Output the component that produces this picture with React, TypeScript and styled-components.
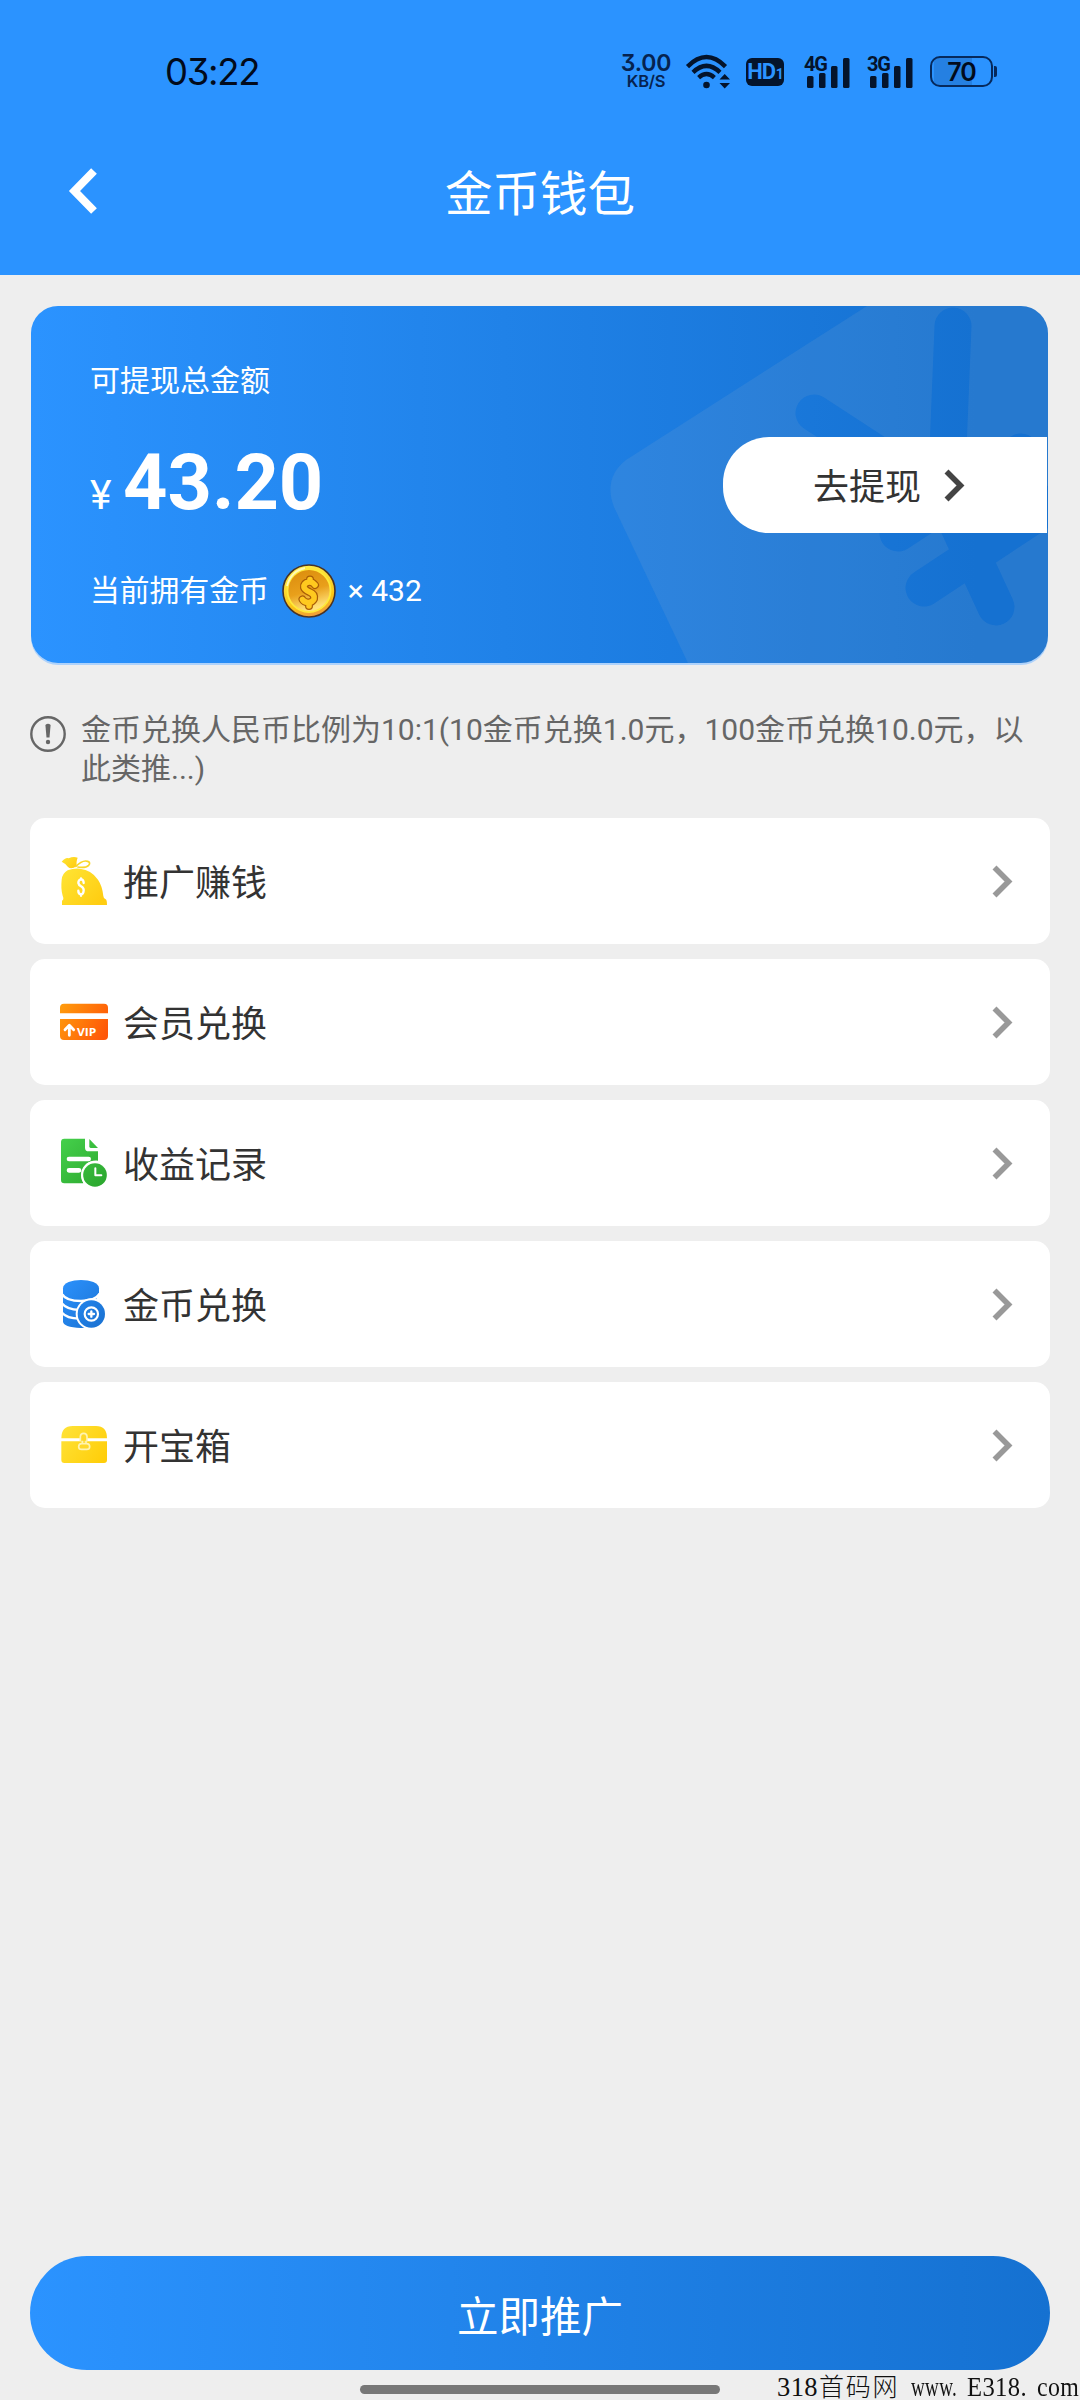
import React from 'react';
import styled, { createGlobalStyle } from 'styled-components';

const GlobalStyle = createGlobalStyle`
  * { box-sizing: border-box; }
  body {
    margin: 0;
    background: #eeeeee;
    font-family: Roboto, "Noto Sans CJK SC", sans-serif;
  }
  svg { display: block; flex: none; overflow: visible; }
`;

const Screen = styled.div`
  width: 1080px;
  height: 2400px;
  display: flex;
  flex-direction: column;
  background: #eeeeee;
  position: relative;
  overflow: hidden;
`;

const Header = styled.header`
  height: 275px;
  background: #2b93ff;
`;

const StatusBar = styled.div`
  height: 107px;
  padding: 36px 83px 0 165px;
  display: flex;
  justify-content: space-between;
  align-items: center;
  color: #04142c;
  font-family: Inter, Roboto, sans-serif;
  font-feature-settings: "cv09";
`;

const Clock = styled.div`
  font-size: 36.5px;
  letter-spacing: -1.3px;
  line-height: 40px;
  color: #020b1c;
`;

const StatusIcons = styled.div`
  display: flex;
  align-items: center;
`;

const NetSpeed = styled.div`
  display: flex;
  flex-direction: column;
  align-items: center;
  width: 54px;
  margin-right: 13px;
  font-weight: 600;
  color: #062350;
`;

const SpeedValue = styled.span`
  font-size: 23px;
  line-height: 20px;
  letter-spacing: -0.2px;
`;

const SpeedUnit = styled.span`
  font-size: 16.5px;
  line-height: 17px;
  letter-spacing: -0.3px;
`;

const HdBadge = styled.div`
  width: 38px;
  height: 28px;
  margin: 0 20px 0 14px;
  border-radius: 6px;
  background: #04142c;
  color: #2b93ff;
  display: flex;
  align-items: baseline;
  justify-content: center;
  font-family: Roboto, sans-serif;
  font-weight: 700;
  font-size: 22px;
  line-height: 28px;
  letter-spacing: -1.2px;
`;

const HdIndex = styled.span`
  font-size: 14px;
  margin-left: 1px;
`;

const Signal = styled.div`
  width: 46px;
  height: 34px;
  margin-right: 17px;
  position: relative;
`;

const SignalLabel = styled.span`
  position: absolute;
  left: 0;
  top: 0;
  font-family: Roboto, sans-serif;
  font-weight: 700;
  font-size: 20px;
  line-height: 18px;
  letter-spacing: -1.2px;
`;

const Battery = styled.div`
  width: 63px;
  height: 31px;
  border: 2.5px solid #06295c;
  border-radius: 10px;
  background: linear-gradient(90deg, #2b93ff 2px, #2580e2 2px, #2580e2 40px, #2b93ff 40px);
  display: flex;
  align-items: center;
  justify-content: center;
  font-weight: 600;
  font-size: 25px;
  letter-spacing: -1px;
  color: #020b1c;
`;

const BatteryTip = styled.div`
  width: 3px;
  height: 11px;
  margin-left: 1px;
  border-radius: 0 2px 2px 0;
  background: #06295c;
`;

const NavBar = styled.div`
  height: 167px;
  padding: 0 69px;
  display: grid;
  grid-template-columns: 100px 1fr 100px;
  align-items: center;
`;

const Title = styled.h1`
  margin: 8px 0 0;
  text-align: center;
  font-size: 47.5px;
  line-height: 60px;
  font-weight: 400;
  color: #ffffff;
`;

const Main = styled.main`
  flex: 1;
  padding: 31px 30px 0;
  display: flex;
  flex-direction: column;
`;

const Card = styled.section`
  margin: 0 2px 0 1px;
  height: 357px;
  flex: none;
  border-radius: 27px;
  background: linear-gradient(90deg, #2b93ff, #1571d1 93%);
  box-shadow: 0 2px 0 #aed2fb;
  color: #ffffff;
  display: grid;
  grid-template-columns: 1fr 325px;
  position: relative;
  overflow: hidden;
`;

const CardArt = styled.svg`
  position: absolute;
  inset: 0;
`;

const Balance = styled.div`
  padding: 55px 0 0 59px;
  position: relative;
`;

const Caption = styled.div`
  font-size: 30px;
  line-height: 40px;
`;

const Amount = styled.div`
  margin-top: 36px;
  height: 92px;
  display: flex;
  align-items: baseline;
  line-height: 92px;
`;

const Currency = styled.span`
  width: 33px;
  font-size: 41px;
`;

const Figure = styled.span`
  font-size: 77.5px;
  font-weight: 700;
`;

const CoinLine = styled.div`
  margin-top: 35px;
  height: 54px;
  display: flex;
  align-items: center;
  font-size: 29.8px;
  line-height: 40px;
`;

const CoinIcon = styled.svg`
  margin: 0 12px 0 13px;
`;

const CoinCount = styled.span`
  font-size: 30px;
  margin-top: -1px;
`;

const WithdrawButton = styled.button`
  align-self: start;
  margin: 131px 1px 0 0;
  height: 96px;
  padding: 0 0 0 90px;
  border: 0;
  border-radius: 46px 0 0 46px;
  background: #ffffff;
  color: #333333;
  display: flex;
  align-items: center;
  gap: 23px;
  font: inherit;
  font-size: 36px;
  line-height: 50px;
  position: relative;
`;

const ButtonText = styled.span`
  margin-top: 6px;
`;

const Notice = styled.p`
  margin: 48px 0 0;
  height: 107px;
  display: flex;
  gap: 15px;
  color: #666666;
  font-size: 30px;
  line-height: 39px;
`;

const NoticeText = styled.span`
  flex: 1;
  margin-top: -1px;
`;

const NoticeIcon = styled.svg`
  margin-top: 5px;
`;

const Menu = styled.nav`
  display: flex;
  flex-direction: column;
  gap: 15px;
`;

const MenuRow = styled.a`
  height: 126px;
  padding: 0 37px 0 28px;
  border-radius: 15px;
  background: #ffffff;
  display: flex;
  align-items: center;
  color: #333333;
`;

const MenuLabel = styled.span`
  flex: 1;
  margin: 6px 0 0 15px;
  font-size: 36px;
  line-height: 50px;
`;

const PromoteButton = styled.button`
  margin: 0 30px 30px;
  height: 114px;
  flex: none;
  border: 0;
  border-radius: 57px;
  background: linear-gradient(90deg, #2b93ff, #1571d1);
  color: #ffffff;
  font: inherit;
  font-size: 41.5px;
  line-height: 60px;
  padding: 9px 0 0;
`;

const HomeIndicator = styled.div`
  position: absolute;
  left: 360px;
  bottom: 6px;
  width: 360px;
  height: 9px;
  border-radius: 5px;
  background: #777777;
`;

const Watermark = styled.div`
  position: absolute;
  right: 0;
  bottom: 0;
  width: 303px;
  display: flex;
  align-items: baseline;
  color: #111111;
  font-family: "Liberation Serif", "Noto Sans CJK SC", serif;
  font-size: 26.5px;
  line-height: 24px;
  white-space: pre;
`;

const MarkPart = styled.span<{ $width: number; $squeeze?: number }>`
  width: ${(p) => p.$width}px;
  flex: none;
  letter-spacing: 0.4px;
  transform: scaleX(${(p) => p.$squeeze ?? 1});
  transform-origin: left center;
`;

const MarkHan = styled(MarkPart)`
  font-weight: 300;
  font-size: 25px;
  letter-spacing: 1.8px;
`;

const Chevron = ({ color }: { color: string }) => (
  <svg width="21" height="33" viewBox="0 0 21 33" fill="none" stroke={color} strokeWidth="5.6">
    <path d="M2.5 2.5 16.5 16.5 2.5 30.5" />
  </svg>
);

const Wifi = () => (
  <svg width="46" height="35" viewBox="0 0 46 35" fill="none" stroke="#04142c" strokeWidth="4.4">
    <path d="M1.5 12.6Q20.500 -6.500 39.500 12.600" />
    <path d="M7 18.300Q20.500 5.500 34 18.300" />
    <path d="M12.600 23.600Q20.500 16.500 28.400 23.600" />
    <circle cx="20.500" cy="31" r="3.300" fill="#04142c" stroke="none" />
    <path d="M33.500 25.500 38.700 20 44 25.500ZM33.500 29 38.700 34.500 44 29Z" fill="#04142c" stroke="none" />
  </svg>
);

const SignalIcon = ({ label }: { label: string }) => (
  <Signal>
    <svg width="46" height="34" viewBox="0 0 46 34" fill="#04142c">
      <rect x="3" y="21" width="6.500" height="12" rx="1.500" />
      <rect x="15" y="18" width="6.500" height="15" rx="1.500" />
      <rect x="27" y="11" width="6.500" height="22" rx="1.500" />
      <rect x="39" y="3" width="6.500" height="30" rx="1.500" />
    </svg>
    <SignalLabel>{label}</SignalLabel>
  </Signal>
);

const BagIcon = () => (
  <svg width="50" height="50" viewBox="54 78 150 150">
    <defs>
      <linearGradient id="bag" x1="0" y1="0" x2="1" y2="0.7">
        <stop offset="0" stopColor="#ffe535" />
        <stop offset="1" stopColor="#ffcd12" />
      </linearGradient>
    </defs>
    <path fill="url(#bag)" d="M65 95Q78 80 86 85Q100 78 113 83Q107 99 111 107Q94 120 84 111Q78 101 65 95Z" />
    <path fill="none" stroke="#f9d72a" strokeWidth="5" d="M106 111Q127 89 143 94Q153 97 146 106Q137 115 112 111" />
    <path fill="url(#bag)" d="M83 121Q101 114 120 116Q155 120 174 149Q187 168 190 198Q191 207 197 208Q201 210 201 225H66V212Q73 209 68 197Q62 177 65 149Q67 130 83 121Z" />
    <path fill="none" stroke="#fff" strokeWidth="7" strokeLinecap="round" d="M131 159Q131 148 123 148Q115 149 115 159Q116 165 123 169Q132 174 131 182Q130 193 123 193Q115 192 115 182M123 145V149M123 193V197" />
  </svg>
);

const VipIcon = () => (
  <svg width="50" height="50" viewBox="54 501 150 150">
    <defs>
      <linearGradient id="vip" x1="60" y1="522" x2="205" y2="600" gradientUnits="userSpaceOnUse">
        <stop offset="0" stopColor="#ff9d0c" />
        <stop offset="1" stopColor="#ff5608" />
      </linearGradient>
    </defs>
    <path fill="url(#vip)" d="M60 550V533Q60 521 72 521H192Q204 521 204 533V550ZM60 567H204V618Q204 630 192 630H72Q60 630 60 618Z" />
    <path fill="none" stroke="#fff" strokeWidth="8.500" strokeLinecap="round" strokeLinejoin="round" d="M88 616V588M75 599 88 586 101 599" />
    <text x="111" y="619" fill="#fff" fontFamily="Open Sans, Noto Sans, sans-serif" fontWeight="700" fontSize="34" textLength="58" lengthAdjust="spacingAndGlyphs">VIP</text>
  </svg>
);

const RecordIcon = () => (
  <svg width="50" height="50" viewBox="54 84 150 150">
    <defs>
      <linearGradient id="record" x1="60" y1="90" x2="200" y2="230" gradientUnits="userSpaceOnUse">
        <stop offset="0" stopColor="#45d04b" />
        <stop offset="1" stopColor="#2aa52d" />
      </linearGradient>
    </defs>
    <path fill="url(#record)" d="M73 86H135V113Q135 124 146 124H174V152Q151 150 137 164Q119 184 126 209L130 220H73Q63 220 63 210V96Q63 86 73 86Z" />
    <path fill="url(#record)" d="M148 87 174 114H152Q148 114 148 109Z" />
    <path stroke="#fff" strokeWidth="14" strokeLinecap="round" d="M87 147H146M87 181H117" />
    <circle cx="165" cy="195" r="42" fill="#fff" />
    <circle cx="165" cy="195" r="35.500" fill="url(#record)" />
    <path fill="none" stroke="#fff" strokeWidth="6" strokeLinecap="round" strokeLinejoin="round" d="M166 175V196H184" />
  </svg>
);

const StackIcon = () => (
  <svg width="50" height="50" viewBox="54 507 150 150">
    <defs>
      <linearGradient id="stack" x1="69" y1="520" x2="195" y2="640" gradientUnits="userSpaceOnUse">
        <stop offset="0" stopColor="#2b90fb" />
        <stop offset="1" stopColor="#1a72d2" />
      </linearGradient>
    </defs>
    <path fill="url(#stack)" d="M69 535C69 502 177 502 177 535V640Q160 654 123 654Q69 652 69 634Z" />
    <path fill="none" stroke="#fff" strokeWidth="7" d="M67 553Q78 573 123 573Q165 573 179 551M67 581Q80 598 118 600M67 609Q80 625 118 626" />
    <path fill="#fff" d="M178 545V580L168 570Z" />
    <circle cx="154" cy="612" r="47" fill="#fff" />
    <circle cx="154" cy="612" r="41" fill="url(#stack)" />
    <circle cx="154" cy="612" r="20" fill="none" stroke="#fff" strokeWidth="6.500" />
    <path stroke="#fff" strokeWidth="7" strokeLinecap="round" d="M154 604V620M146 612H162" />
  </svg>
);

const ChestIcon = () => (
  <svg width="50" height="50" viewBox="54 150 150 150">
    <defs>
      <linearGradient id="chest" x1="64" y1="170" x2="201" y2="270" gradientUnits="userSpaceOnUse">
        <stop offset="0" stopColor="#ffe338" />
        <stop offset="1" stopColor="#ffcd08" />
      </linearGradient>
    </defs>
    <path fill="url(#chest)" d="M64 205Q64 168 98 168H168Q201 168 201 205ZM64 214H201V270Q201 279 192 279H73Q64 279 64 270Z" />
    <path fill="#ffd829" stroke="#fff3b0" strokeWidth="5" d="M121 214V199Q122 190 131 190Q140 190 141 199V214M125 221Q116 221 116 230Q116 238 125 238H140Q149 238 149 230Q149 221 140 221Z" />
    <path stroke="#fff3b0" strokeWidth="5" d="M127 221V212M138 221V212" />
  </svg>
);

const Coin = () => (
  <CoinIcon width="54" height="54" viewBox="0 0 54 54">
    <defs>
      <linearGradient id="coinFace" x1="0" y1="0" x2="0.3" y2="1">
        <stop offset="0" stopColor="#d98a0c" />
        <stop offset="0.600" stopColor="#e9a01b" />
        <stop offset="1" stopColor="#ffe27a" />
      </linearGradient>
      <linearGradient id="coinRim" x1="0.300" y1="0" x2="0.600" y2="1">
        <stop offset="0" stopColor="#fff04d" />
        <stop offset="0.700" stopColor="#fbc516" />
        <stop offset="1" stopColor="#f09a3c" />
      </linearGradient>
    </defs>
    <circle cx="27" cy="27" r="26" fill="url(#coinRim)" stroke="#4a3326" strokeWidth="1.600" />
    <circle cx="27" cy="26.500" r="21.500" fill="url(#coinFace)" stroke="#ffe93a" strokeWidth="1.800" />
    <path d="M5 22Q9 7 23 4" fill="none" stroke="#fff9b8" strokeWidth="1.800" />
    <path d="M33 21Q30.500 17.500 27 18Q21.500 19 22 23.500Q23 26 27.500 28Q33 30 32 35Q30 39 25.500 38.500Q22 38 20.500 35.500M28 15.500V18M27 39V42" fill="none" stroke="#a85c07" strokeWidth="8" strokeLinecap="round" strokeLinejoin="round" />
    <path d="M33 21Q30.500 17.500 27 18Q21.500 19 22 23.500Q23 26 27.500 28Q33 30 32 35Q30 39 25.500 38.500Q22 38 20.500 35.500M28 15.500V18M27 39V42" fill="none" stroke="#ffc91f" strokeWidth="5.600" strokeLinecap="round" strokeLinejoin="round" />
  </CoinIcon>
);

const rows = [
  { label: '推广赚钱', Icon: BagIcon },
  { label: '会员兑换', Icon: VipIcon },
  { label: '收益记录', Icon: RecordIcon },
  { label: '金币兑换', Icon: StackIcon },
  { label: '开宝箱', Icon: ChestIcon },
];

export default function App() {
  return (
    <>
      <GlobalStyle />
      <Screen>
        <Header>
          <StatusBar>
            <Clock>03:22</Clock>
            <StatusIcons>
              <NetSpeed>
                <SpeedValue>3.00</SpeedValue>
                <SpeedUnit>KB/S</SpeedUnit>
              </NetSpeed>
              <Wifi />
              <HdBadge>HD<HdIndex>1</HdIndex></HdBadge>
              <SignalIcon label="4G" />
              <SignalIcon label="3G" />
              <Battery>70</Battery>
              <BatteryTip />
            </StatusIcons>
          </StatusBar>
          <NavBar>
            <svg width="28" height="46" viewBox="0 0 28 46" fill="none" stroke="#ffffff" strokeWidth="8">
              <path d="M25 3 5.500 23 25 43" />
            </svg>
            <Title>金币钱包</Title>
          </NavBar>
        </Header>
        <Main>
          <Card>
            <CardArt width="1017" height="357" viewBox="0 0 1017 357">
              <defs>
                <mask id="yenCut" maskUnits="userSpaceOnUse" x="0" y="0" width="1017" height="357">
                  <rect width="1017" height="357" fill="#fff" />
                  <path
                    d="M922 20 915 193 965 301M783 107 915 193M867 227 990 146M893 282 1020 198"
                    fill="none"
                    stroke="#000"
                    strokeWidth="37"
                    strokeLinecap="round"
                    strokeLinejoin="round"
                  />
                </mask>
              </defs>
              <path
                d="M836 0 595 154Q572 172 583 201L657 357H1017V0Z"
                fill="rgba(200,200,200,0.100)"
                mask="url(#yenCut)"
              />
            </CardArt>
            <Balance>
              <Caption>可提现总金额</Caption>
              <Amount>
                <Currency>¥</Currency>
                <Figure>43.20</Figure>
              </Amount>
              <CoinLine>
                <span>当前拥有金币</span>
                <Coin />
                <CoinCount>× 432</CoinCount>
              </CoinLine>
            </Balance>
            <WithdrawButton>
              <ButtonText>去提现</ButtonText>
              <Chevron color="#444444" />
            </WithdrawButton>
          </Card>
          <Notice>
            <NoticeIcon width="36" height="36" viewBox="0 0 36 36" fill="none" stroke="#666666">
              <circle cx="18" cy="18" r="16.700" strokeWidth="2.400" />
              <path d="M15.400 9Q18 6.500 20.600 9L19.500 21.500H16.500Z" fill="#666666" stroke="none" />
              <circle cx="18" cy="26" r="2.200" fill="#666666" stroke="none" />
            </NoticeIcon>
            <NoticeText>金币兑换人民币比例为10:1(10金币兑换1.0元，100金币兑换10.0元，以此类推...)</NoticeText>
          </Notice>
          <Menu>
            {rows.map(({ label, Icon }) => (
              <MenuRow key={label}>
                <Icon />
                <MenuLabel>{label}</MenuLabel>
                <Chevron color="#999999" />
              </MenuRow>
            ))}
          </Menu>
        </Main>
        <PromoteButton>立即推广</PromoteButton>
        <HomeIndicator />
        <Watermark>
          <MarkPart $width={42}>318</MarkPart>
          <MarkHan $width={92}>首码网</MarkHan>
          <MarkPart $width={56} $squeeze={0.72}>www.</MarkPart>
          <MarkPart $width={70} $squeeze={0.93}>E318.</MarkPart>
          <MarkPart $width={43} $squeeze={0.9}>com</MarkPart>
        </Watermark>
      </Screen>
    </>
  );
}
